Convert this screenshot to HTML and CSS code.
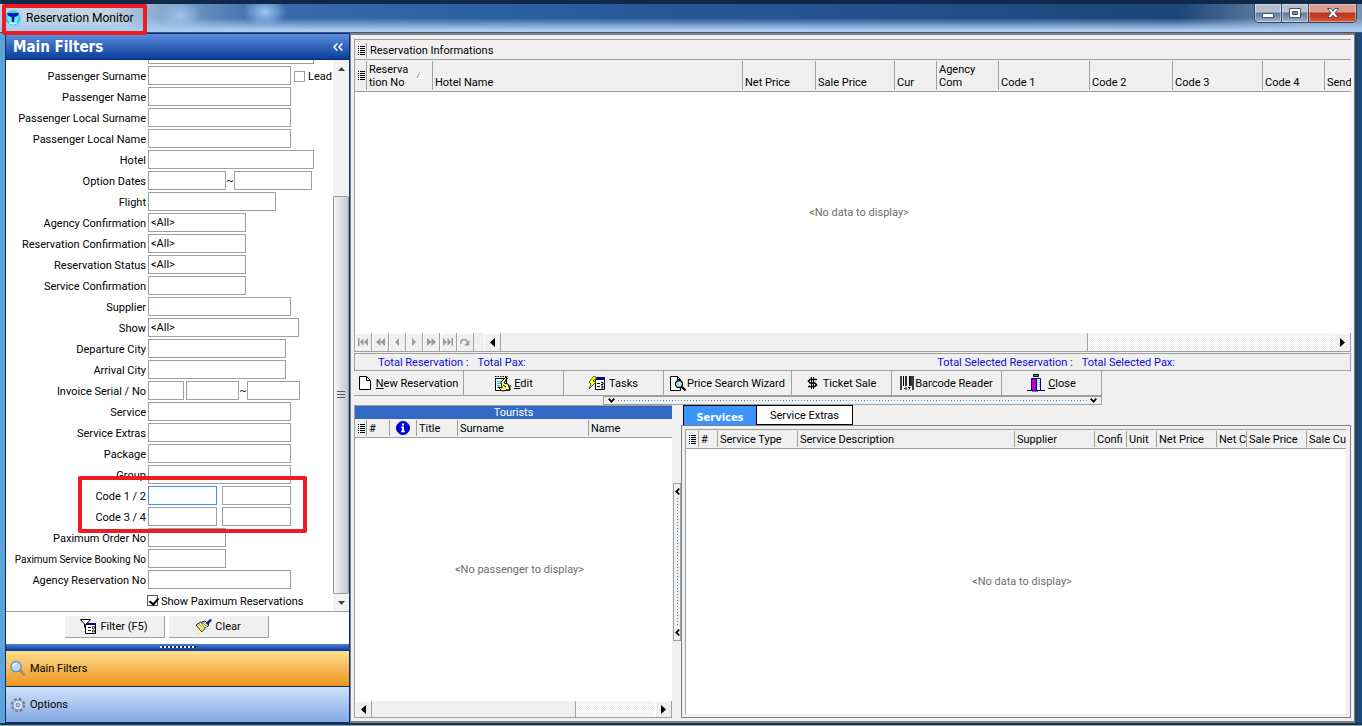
FILE: index.html
```html
<!DOCTYPE html>
<html lang="en">
<head>
<meta charset="utf-8">
<title>Reservation Monitor</title>
<link rel="stylesheet" href="styles.css">
</head>
<body>
<svg class="defs" aria-hidden="true">
  <defs>
    <symbol id="i-list" viewBox="0 0 7 10"><path d="M0 1h1M2 1h5M0 3h1M2 3h5M0 5h1M2 5h5M0 7h1M2 7h5M0 9h1M2 9h5" transform="translate(0 .5)" stroke="#000" /></symbol>
    <symbol id="i-left" viewBox="0 0 5 9"><path d="M5 0v9L0 4.5z"/></symbol>
    <symbol id="i-right" viewBox="0 0 5 9"><path d="M0 0v9L5 4.5z"/></symbol>
    <symbol id="i-chev" viewBox="0 0 7 5"><path d="M.7.7 3.5 3.7 6.3.7" fill="none" stroke="#000" stroke-width="1.7"/></symbol>
    <symbol id="i-chevl" viewBox="0 0 5 7"><path d="M4.3.7 1.2 3.5 4.3 6.3" fill="none" stroke="#000" stroke-width="1.7"/></symbol>
  </defs>
</svg>
<header class="titlebar">
  <div class="caption">
    <svg width="16" height="16" viewBox="0 0 16 16"><circle cx="8" cy="8" r="8" fill="#7be3f3"/><circle cx="8" cy="8" r="6.500" fill="none" stroke="#27cfe8" stroke-width="2"/><path d="M2 3h12l-1.500 3-3 1-.5 5H7l-.5-5-3-1z" fill="#0a19b8"/><path d="M4 13q4 2 8 0" stroke="#fff" fill="none"/></svg>
    <span>Reservation Monitor</span>
  </div>
  <div class="winbtns">
    <button class="wb min" aria-label="Minimize"><svg width="14" height="12" viewBox="0 0 14 12"><path d="M1.500 6.500h11v4h-11z" fill="#fff" stroke="#4a5468"/></svg></button>
    <button class="wb max" aria-label="Maximize"><svg width="14" height="12" viewBox="0 0 14 12"><path d="M1.500 1.500h11v9h-11z" fill="#fff" stroke="#4a5468"/><path d="M4.500 4.500h5v3h-5z" fill="#7b8ca4" stroke="#4a5468"/></svg></button>
    <button class="wb cls" aria-label="Close window"><svg width="14" height="12" viewBox="0 0 14 12"><path d="M1.500 1.500h3.500l2 2.500 2-2.500h3.500L9 6l3.500 4.500H9L7 8l-2 2.500H1.500L5 6z" fill="#fff" stroke="#50545f"/></svg></button>
  </div>
</header>

<div class="window">
  <aside class="side">
    <div class="side-head"><h1>Main Filters</h1><button class="collapse" aria-label="Collapse"><svg width="10" height="8" viewBox="0 0 10 8"><path d="M4.300.5 1 4l3.300 3.500M9.300.5 6 4l3.300 3.500" fill="none" stroke="#fff" stroke-width="1.600"/></svg></button></div>
    <div class="scroll">
      <form class="form" id="filters">
        <div class="row nolabel"><input class="w166" aria-label="Filter"></div>
        <div class="row"><label for="f1">Passenger Surname</label><input id="f1" class="w143"><label class="lead"><input type="checkbox" class="tick">Lead</label></div>
        <div class="row"><label for="f2">Passenger Name</label><input id="f2" class="w143"></div>
        <div class="row"><label for="f3">Passenger Local Surname</label><input id="f3" class="w143"></div>
        <div class="row"><label for="f4">Passenger Local Name</label><input id="f4" class="w143"></div>
        <div class="row"><label for="f5">Hotel</label><input id="f5" class="w166"></div>
        <div class="row"><label for="f6">Option Dates</label><input id="f6" class="w78"><span class="til">~</span><input class="w78" aria-label="Option date to"></div>
        <div class="row"><label for="f7">Flight</label><input id="f7" class="w128"></div>
        <div class="row"><label for="f8">Agency Confirmation</label><select id="f8" class="w98"><option>&lt;All&gt;</option></select></div>
        <div class="row"><label for="f9">Reservation Confirmation</label><select id="f9" class="w98"><option>&lt;All&gt;</option></select></div>
        <div class="row"><label for="f10">Reservation Status</label><select id="f10" class="w98"><option>&lt;All&gt;</option></select></div>
        <div class="row"><label for="f11">Service Confirmation</label><select id="f11" class="w98"><option></option></select></div>
        <div class="row"><label for="f12">Supplier</label><input id="f12" class="w143"></div>
        <div class="row"><label for="f13">Show</label><select id="f13" class="w151"><option>&lt;All&gt;</option></select></div>
        <div class="row"><label for="f14">Departure City</label><input id="f14" class="w138"></div>
        <div class="row"><label for="f15">Arrival City</label><input id="f15" class="w138"></div>
        <div class="row"><label for="f16">Invoice Serial / No</label><input id="f16" class="w36"><input class="w53 gap2" aria-label="Invoice number from"><span class="til">~</span><input class="w53" aria-label="Invoice number to"></div>
        <div class="row"><label for="f17">Service</label><input id="f17" class="w143"></div>
        <div class="row"><label for="f18">Service Extras</label><input id="f18" class="w143"></div>
        <div class="row"><label for="f19">Package</label><input id="f19" class="w143"></div>
        <div class="row"><label for="f20">Group</label><input id="f20" class="w143"></div>
        <div class="codes">
          <div class="row"><label for="f21">Code 1 / 2</label><input id="f21" class="w69 active"><input class="w69 gap5" aria-label="Code 2"></div>
          <div class="row"><label for="f22">Code 3 / 4</label><input id="f22" class="w69"><input class="w69 gap5" aria-label="Code 4"></div>
        </div>
        <div class="row"><label for="f23">Paximum Order No</label><input id="f23" class="w78"></div>
        <div class="row long"><label for="f24">Paximum Service Booking No</label><input id="f24" class="w78"></div>
        <div class="row"><label for="f25">Agency Reservation No</label><input id="f25" class="w143"></div>
        <div class="row only"><input type="checkbox" class="tick" id="f26" checked><label for="f26">Show Paximum Reservations</label></div>
      </form>
      <div class="vbar">
        <button aria-label="Scroll up"><svg width="7" height="4" viewBox="0 0 7 4"><path d="M0 4h7L3.500 0z" fill="#444"/></svg></button>
        <div class="vspace"></div>
        <div class="vthumb"><svg width="8" height="8" viewBox="0 0 8 8"><path d="M0 .5h8M0 3.500h8M0 6.500h8" stroke="#555"/></svg></div>
        <button aria-label="Scroll down"><svg width="7" height="4" viewBox="0 0 7 4"><path d="M0 0h7L3.500 4z" fill="#444"/></svg></button>
      </div>
    </div>
    <div class="actions">
      <button form="filters" type="button"><svg width="17" height="16" viewBox="0 0 17 16"><path d="M.5.5h10L6.500 5v5l-2-2V5z" fill="#fff" stroke="#000"/><path d="M5.500 5.500h10v9h-10z" fill="#fff" stroke="#000"/><path d="M6 4h10v2H6z" fill="#000080"/><path d="M8 8.500h3M8 11.500h3" stroke="#000"/><path d="M12.500 7.500h2v2h-2zM12.500 11h2v2h-2z" fill="none" stroke="#000" stroke-width=".7"/></svg>Filter (F5)</button>
      <button form="filters" type="button"><svg width="17" height="15" viewBox="0 0 17 15"><path d="m1 6 5-3 6 4-5 6z" fill="#ffffa0" stroke="#222"/><path d="m4 5 5 6M6 4l4 5" stroke="#998f20"/><path d="m7 3 3-1 4 4-2 2" fill="#ccc" stroke="#222"/><path d="m11 4 4-4 2 1-4 5z" fill="#0a1a8c"/><path d="M0 14.500h6l2-2" fill="none" stroke="#f2ea00" stroke-dasharray="1 1"/></svg>Clear</button>
    </div>
    <div class="split"><i></i></div>
    <button class="nav on"><svg width="16" height="17" viewBox="0 0 17 17"><path d="m10 10 5 5" stroke="#b58a5e" stroke-width="3" stroke-linecap="round"/><circle cx="6.500" cy="6.500" r="5.500" fill="#b9d9fa" stroke="#6d8fc0" stroke-width="1.500"/><path d="M3.500 6q.5-3 3.500-3" fill="none" stroke="#fff" stroke-width="1.500"/></svg>Main Filters</button>
    <button class="nav"><svg width="16" height="16" viewBox="0 0 16 16"><circle cx="8" cy="8" r="6" fill="none" stroke="#6d7f96" stroke-width="2.400" stroke-dasharray="2.700 2.010"/><circle cx="8" cy="8" r="4.800" fill="#e6ecf3" stroke="#8695aa"/><circle cx="8" cy="8" r="2" fill="#a9c6ef" stroke="#7b8ca3"/></svg>Options</button>
  </aside>

  <main class="main">
    <section class="grid">
      <div class="band"><svg class="li" width="7" height="10"><use href="#i-list"/></svg><h2>Reservation Informations</h2></div>
      <table class="cols tall">
        <colgroup><col class="c11"><col class="c66"><col><col class="c73"><col class="c79"><col class="c42"><col class="c62"><col class="c91"><col class="c83"><col class="c90"><col class="c62"><col class="c27"></colgroup>
        <thead><tr><th class="ind"><svg class="li" width="7" height="10"><use href="#i-list"/></svg></th><th><span class="sort"><span>Reserva<br>tion No</span><svg width="8" height="7" viewBox="0 0 8 7"><path d="M4 0 .5 6.500" stroke="#999"/><path d="M4 0l3.500 6.500H0" fill="none" stroke="#fff"/></svg></span></th><th>Hotel Name</th><th>Net Price</th><th>Sale Price</th><th>Cur</th><th>Agency<br>Com</th><th>Code 1</th><th>Code 2</th><th>Code 3</th><th>Code 4</th><th>Send</th></tr></thead>
      </table>
      <p class="empty">&lt;No data to display&gt;</p>
      <div class="hbar">
        <div class="pager">
          <button aria-label="First"><svg width="10" height="8" viewBox="0 0 10 8"><path d="M0 0h1.500v8H0zM5.500 0v8L2 4zM10 0v8L6 4z"/></svg></button>
          <button aria-label="Previous page"><svg width="9" height="8" viewBox="0 0 9 8"><path d="M4.500 0v8L0 4zM9 0v8L4.500 4z"/></svg></button>
          <button aria-label="Previous"><svg width="4" height="8" viewBox="0 0 4 8"><path d="M4 0v8L0 4z"/></svg></button>
          <button aria-label="Next"><svg width="4" height="8" viewBox="0 0 4 8"><path d="M0 0v8l4-4z"/></svg></button>
          <button aria-label="Next page"><svg width="9" height="8" viewBox="0 0 9 8"><path d="M0 0v8l4.500-4zM4.500 0v8L9 4z"/></svg></button>
          <button aria-label="Last"><svg width="10" height="8" viewBox="0 0 10 8"><path d="M0 0v8l4-4zM4.500 0v8L8 4zM8.500 0H10v8H8.500z"/></svg></button>
          <button aria-label="Refresh"><svg width="10" height="8" viewBox="0 0 10 8"><path d="M1 6V4.500Q1 1.500 4 1.500T7 4" fill="none" stroke="#999" stroke-width="1.500"/><path d="M9.500 2v5.500H4z"/></svg></button>
        </div>
        <button class="arr" aria-label="Scroll left"><svg width="5" height="9"><use href="#i-left"/></svg></button>
        <div class="thumb main-thumb"></div><div class="track main-track"></div>
        <button class="arr" aria-label="Scroll right"><svg width="5" height="9"><use href="#i-right"/></svg></button>
      </div>
    </section>

    <div class="totals"><span>Total Reservation :</span><span>Total Pax:</span><span class="sel">Total Selected Reservation :</span><span>Total Selected Pax:</span></div>

    <div class="tools">
      <button class="t110"><svg class="new" width="12" height="14" viewBox="0 0 12 14"><path d="M.5.5h7l4 4v9H.5z" fill="#fff" stroke="#000"/><path d="M7.500.5v4h4" fill="none" stroke="#000"/></svg><span><u>N</u>ew Reservation</span></button>
      <button><svg width="17" height="17" viewBox="0 0 17 17"><path d="M1.500 3.500h11v12h-11z" fill="#fff" stroke="#000"/><path d="M1 1.500h13M1 3.500h13" stroke="#000" stroke-dasharray="1.500 1"/><path d="M3 6.500h8M3 8.500h5M3 10.500h3M3 12.500h4" stroke="#00cfe0"/><path d="m7 7 5-5 1 1-3 5 4 1 2 6-8 1-4-4 4 1z" fill="#ffff7a" stroke="#000"/><path d="m9 10 3 2M12 15h4V10" stroke="#000" fill="none"/></svg><span><u>E</u>dit</span></button>
      <button><svg width="17" height="14" viewBox="0 0 17 14"><path d="M6.500 2.500h9v11h-9z" fill="#fff" stroke="#000"/><path d="M6 1h10v3H6z" fill="#000080"/><path d="M8 7.500h3M8 10.500h3M12 6.500h2v2h-2M12 10h2v2h-2" fill="none" stroke="#000"/><path d="m5 0 3 2-4 3 3 1-7 7 2-5-2-2z" fill="#ffff00" stroke="#333" stroke-width=".8"/></svg><span>Tasks</span></button>
      <button class="t128"><svg width="16" height="15" viewBox="0 0 16 15"><path d="M.5.5h7l3 3v11H.5z" fill="#fff" stroke="#000"/><path d="M7.500.5v3h3" fill="none" stroke="#000"/><circle cx="9" cy="8" r="3.500" fill="#9defef" stroke="#000" stroke-width="1.300"/><path d="m11.500 10.500 4 4" stroke="#000" stroke-width="2"/></svg><span class="tight">Price Search Wizard</span></button>
      <button><svg width="11" height="12" viewBox="0 0 11 12"><path d="M10 2.500H3L1.500 4 3 6h5l1.500 2L8 9.500H1" fill="none" stroke="#000" stroke-width="1.600"/><path d="M4.500 0v12M6.500 0v12" stroke="#000"/></svg><span class="wide">Ticket Sale</span></button>
      <button class="t110"><svg width="14" height="14" viewBox="0 0 14 14"><path d="M1 0v14M13 0v14" stroke="#000" stroke-width="1.500"/><path d="M3.500 0v10M9.500 0v10" stroke="#000"/><path d="M6 0v10M11 0v10" stroke="#000" stroke-width="1.600"/><path d="M4 12.500h1M6 11v3M8 11.500h2l-1 2" stroke="#000" fill="none"/></svg><span class="tight">Barcode Reader</span></button>
      <button><svg width="18" height="18" viewBox="0 0 18 18"><path d="M6.500.5h5v2h-5z" fill="#00d020" stroke="#000"/><path d="M4.500 4.500h9v12h-9z" fill="#fff" stroke="#000080"/><path d="M5 5h4v12l-4-1z" fill="#c000c0"/><path d="M9.500 5v12" stroke="#000080"/><path d="M11 6v10M12.500 6v8" stroke="#20d0e0" stroke-dasharray="1 1"/><path d="M0 16.500h5M13 16.500h5" stroke="#000080"/><path d="M5 17.500h6" stroke="#777"/></svg><span><u>C</u>lose</span></button>
    </div>
    <div class="hhandle"><svg width="7" height="5"><use href="#i-chev"/></svg><i></i><svg width="7" height="5"><use href="#i-chev"/></svg></div>

    <div class="lower">
      <section class="tour">
        <h2>Tourists</h2>
        <table class="cols">
          <colgroup><col class="c11"><col class="c23"><col class="c27"><col class="c41"><col><col class="c84"></colgroup>
          <thead><tr><th class="ind"><svg class="li" width="7" height="10"><use href="#i-list"/></svg></th><th>#</th><th class="mid"><svg width="14" height="14" viewBox="0 0 14 14" role="img" aria-label="Info"><circle cx="7" cy="7" r="6.500" fill="#00e" stroke="#001060"/><path d="M6 2.500h2v2H6zM5 5.500h3v4.500h1V11.200H5V10h1V6.700H5z" fill="#fff"/></svg></th><th>Title</th><th>Surname</th><th>Name</th></tr></thead>
        </table>
        <p class="empty">&lt;No passenger to display&gt;</p>
        <div class="hbar small">
          <button class="arr" aria-label="Scroll left"><svg width="5" height="9"><use href="#i-left"/></svg></button>
          <div class="thumb tour-thumb"></div><div class="track tour-track"></div>
          <button class="arr" aria-label="Scroll right"><svg width="5" height="9"><use href="#i-right"/></svg></button>
        </div>
      </section>
      <div class="vsplit"><div class="vhandle"><svg width="5" height="7"><use href="#i-chevl"/></svg><i></i><svg width="5" height="7"><use href="#i-chevl"/></svg></div></div>
      <section class="serv">
        <div class="tabs"><button class="tab on">Services</button><button class="tab">Service Extras</button></div>
        <div class="page"><div class="inner">
          <table class="cols">
            <colgroup><col class="c12"><col class="c19"><col class="c80"><col><col class="c80"><col class="c32"><col class="c30"><col class="c60"><col class="c30"><col class="c60"><col class="c40"></colgroup>
            <thead><tr><th class="ind"><svg class="li" width="7" height="10"><use href="#i-list"/></svg></th><th>#</th><th>Service Type</th><th>Service Description</th><th>Supplier</th><th>Confi</th><th>Unit</th><th>Net Price</th><th>Net C</th><th>Sale Price</th><th>Sale Cu</th></tr></thead>
          </table>
          <p class="empty">&lt;No data to display&gt;</p>
        </div></div>
      </section>
    </div>
  </main>
</div>
<footer class="edge"></footer>
<div class="mark"></div>
</body>
</html>
```
FILE: styles.css
```css
* { box-sizing: border-box; }
html, body { height: 100%; margin: 0; }
body {
  display: flex;
  flex-direction: column;
  overflow: hidden;
  font: 11px/13px Roboto, "DejaVu Sans Condensed", sans-serif;
  color: #000;
  background: #1d4a7e;
}
button, input, select { font: inherit; color: inherit; margin: 0; border-radius: 0; }
button { padding: 0; border: 0; background: none; }
h1, h2, p { margin: 0; font: inherit; }
svg { flex: none; display: block; }
.defs { position: absolute; width: 0; height: 0; }

/* title bar */
.titlebar {
  flex: none;
  height: 33px;
  display: flex;
  justify-content: space-between;
  border-top: 4px solid #10294a;
  border-bottom: 1px solid #44587a;
  background:
    radial-gradient(ellipse 22px 16px at 180px 12px, #9fc4ea, transparent),
    radial-gradient(ellipse 22px 16px at 265px 8px, #9fc8f4, transparent),
    linear-gradient(transparent 50%, #a9cbf0 92%),
    linear-gradient(90deg, #c3d3e3 0, #c3d3e3 110px, #7da0c9 170px, #3a6cab 260px, #2a5f9d 500px, #245391 800px, #1c4678 1180px, #7892b2 1300px);
}
.caption { display: flex; align-items: center; gap: 5px; padding: 0 0 1px 5px; font-size: 12px; line-height: 16px; }
.winbtns { display: flex; height: 19px; margin-right: 5px; border: 1px solid #33445c; border-top: 0; border-radius: 0 0 5px 5px; overflow: hidden; }
.wb { display: flex; align-items: center; justify-content: center; width: 27px; border-right: 1px solid #33445c; background: linear-gradient(#b5c1d0 45%, #5f7896 50%, #9db4d0); box-shadow: inset 0 0 0 1px #ffffff66; }
.wb.cls { width: 47px; border-right: 0; background: linear-gradient(#dc9c8f 45%, #bb3018 50%, #d9573b); }

/* window body */
.window { flex: 1; min-height: 0; display: flex; margin-right: 5px; border-left: 5px solid #5aa5d6; border-right: 2px solid #2c3e55; background: #f0f0f0; }

.side { flex: none; width: 345px; display: flex; flex-direction: column; border: 1px solid #0a2a80; background: #fff; }
.side-head { flex: none; height: 26px; display: flex; align-items: center; justify-content: space-between; padding: 0 6px 0 7px; color: #fff; background: linear-gradient(#5b8fdc, #0a3c99); border-bottom: 1px solid #0a2a80; }
.side-head h1 { font: bold 15px/18px "DejaVu Sans Condensed", sans-serif; }
.scroll { flex: 1; min-height: 0; display: flex; border-bottom: 1px solid #a0a0a0; overflow: hidden; }
.form { flex: 1; min-width: 0; display: flex; flex-direction: column; justify-content: flex-end; }
.row { flex: none; display: flex; align-items: center; height: 21px; }
.row > label { padding-top: 1px; }
.row > label:first-child { width: 140px; margin-right: 2px; text-align: right; white-space: nowrap; }
.row.long { font-size: 10px; }
.row.nolabel { padding-left: 142px; }
.row input, .row select { height: 19px; padding: 0 2px; border: 1px solid #a0a0a0; background: #fff; appearance: none; outline: none; }
.row .active { border-color: #3b94f0; }
.row .tick { width: 11px; height: 11px; padding: 0; margin: 0 3px 0 0; }
.tick:checked { position: relative; }
.tick:checked::after { content: ""; position: absolute; left: 3px; top: 0; width: 4px; height: 7px; border: solid #000; border-width: 0 2px 2px 0; rotate: 40deg; }
.row .tick:checked { border-color: #555; }
.lead { display: flex; align-items: center; margin-left: 3px; }
.only { padding-left: 141px; }
.til { width: 8px; text-align: center; }
.gap2 { margin-left: 2px; }
.gap5 { margin-left: 5px; }
.w36 { width: 36px; } .w53 { width: 53px; } .w69 { width: 69px; } .w78 { width: 78px; }
.w98 { width: 98px; } .w128 { width: 128px; } .w138 { width: 138px; } .w143 { width: 143px; }
.w151 { width: 151px; } .w166 { width: 166px; }

.codes { position: relative; }
.codes::after { content: ""; position: absolute; inset: -9px 26px -6px 72px; border: 4px solid #ed1c24; border-radius: 2px; pointer-events: none; }
.mark { position: absolute; left: 2px; top: 4px; width: 145px; height: 31px; border: 4px solid #ed1c24; border-radius: 2px; pointer-events: none; }

.vbar { flex: none; width: 16px; display: flex; flex-direction: column; background: #f2f2f2; }
.vbar button { height: 17px; display: flex; align-items: center; justify-content: center; }
.vspace { flex: 119; }
.vthumb { flex: 398; display: flex; align-items: center; justify-content: center; border: 1px solid #999; border-radius: 2px; background: linear-gradient(90deg, #f6f6f6, #c6c6ca); }

.actions { flex: none; display: flex; justify-content: center; gap: 4px; height: 32px; padding: 4px 22px 6px 0; }
.actions button { width: 100px; display: flex; align-items: center; justify-content: center; gap: 3px; background: #f0f0f0; border: solid #a0a0a0; border-width: 0 1px 1px 0; }
.split { flex: none; height: 7px; display: flex; justify-content: center; padding-top: 2px; background: linear-gradient(#4a7fd2, #0a3595); }
.split i { width: 36px; height: 2px; background: repeating-linear-gradient(90deg, #fff 0 2px, #0a2a80 2px 4px); }
.nav { flex: none; height: 35px; display: flex; align-items: center; gap: 4px; padding-left: 4px; background: linear-gradient(#d0e2fb, #82a9e2); }
.nav.on { height: 36px; background: linear-gradient(#fbdf8e, #ee951c); border-bottom: 1px solid #0a2a80; }

/* right side */
.main { flex: 1; min-width: 0; display: flex; flex-direction: column; padding: 4px 3px 3px; border: 1px solid #808080; border-top-width: 2px; border-bottom-width: 2px; }
.grid { flex: 311; min-height: 0; display: flex; flex-direction: column; border: 1px solid #a0a0a0; border-right: 0; background: #fff; }
.band { flex: none; height: 20px; display: flex; align-items: center; padding: 1px 0 0 3px; background: #f0f0f0; border-bottom: 1px solid #a0a0a0; }
.band h2 { margin-left: 1px; padding-left: 3px; line-height: 15px; border-left: 1px solid #a0a0a0; }
.cols { flex: none; width: 100%; table-layout: fixed; border-collapse: collapse; background: #f0f0f0; border-bottom: 1px solid #a0a0a0; }
.cols th { height: 18px; padding: 1px 0 0 3px; font-weight: normal; text-align: left; vertical-align: middle; overflow: hidden; white-space: nowrap; background: linear-gradient(#a0a0a0, #a0a0a0) left center / 1px calc(100% - 2px) no-repeat; }
.cols th.ind { background: none; }
.cols th.mid { padding-left: 7px; }
.tall th { height: 31px; padding-bottom: 2px; vertical-align: bottom; }
.tall th.ind { vertical-align: middle; }
.sort { display: flex; align-items: center; justify-content: space-between; padding-right: 8px; }
.empty { flex: 1; min-height: 0; display: flex; align-items: center; justify-content: center; padding-left: 12px; color: #6d6d6d; background: #fff; }
.c11 { width: 11px; } .c12 { width: 12px; } .c19 { width: 19px; } .c23 { width: 23px; } .c27 { width: 27px; }
.c30 { width: 30px; } .c32 { width: 32px; } .c40 { width: 40px; } .c41 { width: 41px; } .c42 { width: 42px; }
.c60 { width: 60px; } .c62 { width: 62px; } .c66 { width: 66px; } .c73 { width: 73px; } .c79 { width: 79px; }
.c80 { width: 80px; } .c83 { width: 83px; } .c84 { width: 84px; } .c90 { width: 90px; } .c91 { width: 91px; }

.hbar { flex: none; height: 18px; display: flex; background: #f0f0f0; }
.hbar.small { height: 16px; }
.pager { display: flex; margin-right: 10px; }
.pager button, .arr { width: 17px; display: flex; align-items: center; justify-content: center; background: #f0f0f0; border-right: 1px solid #a0a0a0; box-shadow: inset 1px 1px #fff; }
.pager button { fill: #999; }
.thumb { background: #f0f0f0; border-right: 1px solid #a0a0a0; }
.track { background: repeating-conic-gradient(#fff 0 25%, #ececec 0 50%) 0 0 / 2px 2px; }
.main-thumb { flex: 586; } .main-track { flex: 246; }
.tour-thumb { flex: 204; } .tour-track { flex: 80; }

.totals { flex: none; display: flex; gap: 9px; height: 18px; margin-top: 1px; padding: 2px 175px 0 23px; border: 1px solid #a0a0a0; color: #0c0cdc; }
.totals .sel { margin-left: auto; }
.tools { flex: none; display: flex; height: 25px; }
.tools button { width: 100px; display: flex; align-items: center; justify-content: center; gap: 3px; border: solid #a0a0a0; border-width: 0 1px 1px 0; white-space: nowrap; }
.tools .t110 { width: 110px; }
.tools .t128 { width: 128px; }
.tools .tight { margin-left: -2px; }
.tools .wide, .tools .new + span { margin-left: 2px; }
.hhandle { flex: none; width: 499px; height: 9px; margin-left: 249px; display: flex; align-items: center; gap: 3px; padding: 0 4px; border: 1px solid #a0a0a0; }
.hhandle i { flex: 1; height: 1px; background: repeating-linear-gradient(90deg, #3a90d0 0 1px, transparent 1px 3px); }

.lower { flex: 313; min-height: 0; display: flex; }
.tour { flex: none; width: 318px; display: flex; flex-direction: column; border: 1px solid #a0a0a0; border-right: 0; }
.tour h2 { flex: none; height: 13px; color: #fff; text-align: center; background: #316ac5; }
.vsplit { flex: none; width: 9px; display: flex; align-items: center; }
.vhandle { width: 8px; height: 158px; margin-left: 1px; display: flex; flex-direction: column; align-items: center; gap: 3px; padding: 4px 0; border: 1px solid #a0a0a0; }
.vhandle i { flex: 1; width: 1px; background: repeating-linear-gradient(#3a90d0 0 1px, transparent 1px 3px); }
.serv { flex: 1; min-width: 0; display: flex; flex-direction: column; }
.tabs { flex: none; display: flex; padding-left: 2px; height: 20px; }
.tab { width: 97px; border: 1px solid #000; background: #fff; }
.tab.on { width: 73px; padding-top: 3px; border-width: 1px 0 0 1px; color: #fff; font-family: "DejaVu Sans Condensed", sans-serif; font-weight: bold; background: #3b94ff; }
.page { flex: 1; min-height: 0; display: flex; padding: 3px 4px 3px 3px; border: 1px solid #808080; }
.inner { flex: 1; min-width: 0; display: flex; flex-direction: column; border: solid #a0a0a0; border-width: 1px 0 0 1px; }
.edge { flex: none; height: 3px; background: linear-gradient(#1b3448 50%, #8fa9b8 50%); }
```
